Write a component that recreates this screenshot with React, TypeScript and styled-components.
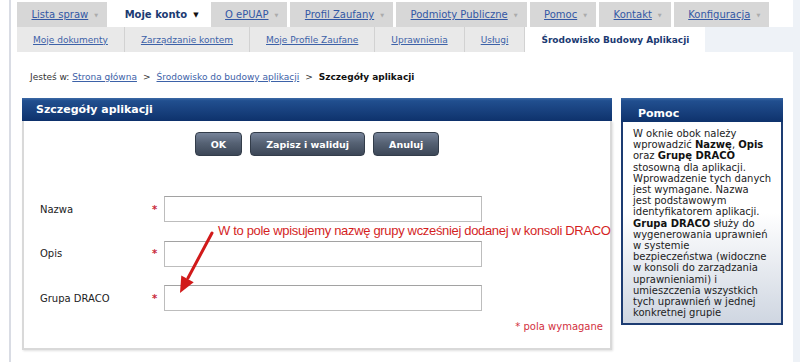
import React from 'react';
import styled, { createGlobalStyle } from 'styled-components';

const GlobalStyle = createGlobalStyle`
  html, body {
    margin: 0;
    padding: 0;
    background: #ffffff;
    font-family: 'DejaVu Sans', Verdana, sans-serif;
  }
`;

const Page = styled.div`
  width: 800px;
  height: 362px;
  display: flex;
  overflow: hidden;
`;

const Gutter = styled.div<{ $tint?: boolean }>`
  width: ${(p) => (p.$tint ? 'auto' : '9px')};
  flex: ${(p) => (p.$tint ? '1' : 'none')};
  background: ${(p) => (p.$tint ? '#eef2f7' : '#ffffff')};
`;

const Shell = styled.div`
  width: 782px;
  border-left: 2px solid #d9dce4;
  background: #ffffff;
  display: flex;
  flex-direction: column;
`;

const TopNav = styled.nav`
  display: flex;
  gap: 3px;
  height: 25px;
  margin-top: 2px;
  padding-left: 6px;
`;

const Tab = styled.div<{ $active?: boolean }>`
  display: flex;
  align-items: center;
  gap: 6px;
  padding: 0 9px 0 14.5px;
  background: ${(p) => (p.$active ? '#ffffff' : '#d7d7d7')};
  font-size: 10px;

  a {
    color: ${(p) => (p.$active ? '#1b3a72' : '#3358a5')};
    font-weight: ${(p) => (p.$active ? 'bold' : 'normal')};
    text-decoration: ${(p) => (p.$active ? 'none' : 'underline')};
  }
`;

const Caret = styled.span<{ $active?: boolean }>`
  font-size: ${(p) => (p.$active ? '7px' : '5px')};
  color: ${(p) => (p.$active ? '#111111' : '#ababab')};
`;

const SubNav = styled.div`
  display: flex;
  height: 25px;
  padding-left: 6px;
`;

const SubBar = styled.div`
  display: flex;
  background: #e9e9e9;
`;

const SubItem = styled.div<{ $active?: boolean }>`
  display: flex;
  align-items: center;
  padding: 0 16px;
  font-size: 9px;
  background: ${(p) => (p.$active ? '#ffffff' : 'transparent')};
  border-right: ${(p) => (p.$active ? 'none' : '1px solid #d2d2d2')};

  a {
    color: ${(p) => (p.$active ? '#1b3a72' : '#3d62a8')};
    font-weight: ${(p) => (p.$active ? 'bold' : 'normal')};
    text-decoration: ${(p) => (p.$active ? 'none' : 'underline')};
  }
`;

const SubRest = styled.div`
  flex: 1;
  background: #eef2f7;
`;

const Crumbs = styled.div`
  padding: 18px 0 0 19px;
  height: 14px;
  line-height: 14px;
  margin-bottom: 14px;
  font-size: 9px;
  color: #333333;

  a {
    color: #3d62a8;
    text-decoration: underline;
  }
  b {
    color: #111111;
  }
`;

const Sep = styled.span`
  margin: 0 6px;
`;

const Content = styled.div`
  display: flex;
  gap: 9px;
  padding-left: 11px;
`;

const MainPanel = styled.section`
  width: 590px;
`;

const PanelHead = styled.div<{ $tall?: boolean }>`
  height: ${(p) => (p.$tall ? '24px' : '23px')};
  padding-left: ${(p) => (p.$tall ? '17px' : '14px')};
  padding-top: ${(p) => (p.$tall ? '6px' : '0')};
  box-sizing: border-box;
  display: flex;
  align-items: center;
  background: linear-gradient(#3d6aa6 0%, #214f8f 12%, #173f7c 60%, #0e326c 100%);
  color: #ffffff;
  font-size: 11px;
  font-weight: bold;
`;

const PanelBody = styled.div`
  position: relative;
  height: 229px;
  box-sizing: border-box;
  border: 2px solid #d9d9d9;
  border-top: none;
  box-shadow: 1px 1px 2px rgba(0, 0, 0, 0.12);
  padding-top: 11px;
`;

const Actions = styled.div`
  display: flex;
  justify-content: center;
  gap: 8px;
`;

const Button = styled.button`
  height: 24px;
  padding: 0 15px;
  border: 1px solid #333d4a;
  border-radius: 4px;
  background: linear-gradient(#77849a 0%, #566274 45%, #3c4757 100%);
  color: #ffffff;
  font-family: 'DejaVu Sans', Verdana, sans-serif;
  font-size: 9.5px;
  font-weight: bold;
`;

const Form = styled.div`
  display: grid;
  grid-template-columns: 110px 14px 318px;
  grid-auto-rows: 26px;
  row-gap: 18.5px;
  align-items: center;
  margin-top: 40px;
  padding-left: 16px;
`;

const Label = styled.div`
  font-size: 10px;
  color: #222222;
`;

const Star = styled.span`
  color: #c8283a;
  font-size: 10px;
  font-weight: bold;
  padding-left: 2px;
`;

const Input = styled.input`
  height: 26px;
  box-sizing: border-box;
  border: 1px solid #bdbdbd;
  border-top-color: #a2a2a2;
  background: #ffffff;
  margin: 0;
`;

const Required = styled.div`
  margin-top: 10px;
  padding-right: 7px;
  text-align: right;
  font-size: 10px;
  line-height: 12px;
  color: #d2303e;
`;

const Note = styled.div`
  position: absolute;
  left: 194px;
  top: 102px;
  font-family: 'Liberation Sans', Arial, sans-serif;
  font-size: 13px;
  line-height: 16px;
  color: #d41f1f;
  white-space: nowrap;
  letter-spacing: -0.33px;
`;

const Arrow = styled.svg`
  position: absolute;
  left: 151px;
  top: 109px;
`;

const HelpPanel = styled.aside`
  width: 162px;
`;

const HelpBody = styled.div`
  height: 203px;
  box-sizing: border-box;
  border: 2px solid #1d3c72;
  border-top: none;
  padding: 6px 4px 0 10px;
  background: linear-gradient(#ffffff 0%, #ffffff 45%, #cfd6e1 100%);
  font-size: 10px;
  line-height: 11.2px;
  color: #222222;
  white-space: nowrap;

  b {
    color: #111111;
  }
`;

const tabs = [
  'Lista spraw',
  'Moje konto',
  'O ePUAP',
  'Profil Zaufany',
  'Podmioty Publiczne',
  'Pomoc',
  'Kontakt',
  'Konfiguracja',
];

const subs = ['Moje dokumenty', 'Zarządzanie kontem', 'Moje Profile Zaufane', 'Uprawnienia', 'Usługi'];

const fields = ['Nazwa', 'Opis', 'Grupa DRACO'];

export default function App() {
  return (
    <>
      <GlobalStyle />
      <Page>
        <Gutter />
        <Shell>
          <TopNav>
            {tabs.map((t) => {
              const active = t === 'Moje konto';
              return (
                <Tab key={t} $active={active}>
                  <a>{t}</a>
                  <Caret $active={active}>▼</Caret>
                </Tab>
              );
            })}
          </TopNav>
          <SubNav>
            <SubBar>
              {subs.map((s) => (
                <SubItem key={s}>
                  <a>{s}</a>
                </SubItem>
              ))}
              <SubItem $active>
                <a>Środowisko Budowy Aplikacji</a>
              </SubItem>
            </SubBar>
            <SubRest />
          </SubNav>

          <Crumbs>
            Jesteś w: <a>Strona główna</a>
            <Sep>&gt;</Sep>
            <a>Środowisko do budowy aplikacji</a>
            <Sep>&gt;</Sep>
            <b>Szczegóły aplikacji</b>
          </Crumbs>

          <Content>
            <MainPanel>
              <PanelHead>Szczegóły aplikacji</PanelHead>
              <PanelBody>
                <Actions>
                  <Button>OK</Button>
                  <Button>Zapisz i waliduj</Button>
                  <Button>Anuluj</Button>
                </Actions>
                <Form>
                  {fields.map((f) => (
                    <React.Fragment key={f}>
                      <Label>{f}</Label>
                      <Star>*</Star>
                      <Input />
                    </React.Fragment>
                  ))}
                </Form>
                <Required>* pola wymagane</Required>

                <Note>W to pole wpisujemy nazwę grupy wcześniej dodanej w konsoli DRACO</Note>
                <Arrow width="40" height="66" viewBox="0 0 40 66">
                  <line x1="37" y1="3" x2="13" y2="48" stroke="#d11a1a" strokeWidth="3" strokeLinecap="round" />
                  <polygon points="5,63 18.7,52.2 6.3,45.6" fill="#d11a1a" />
                </Arrow>
              </PanelBody>
            </MainPanel>

            <HelpPanel>
              <PanelHead $tall>Pomoc</PanelHead>
              <HelpBody>
                W oknie obok należy
                <br />
                wprowadzić <b>Nazwę</b>, <b>Opis</b>
                <br />
                oraz <b>Grupę DRACO</b>
                <br />
                stosowną dla aplikacji.
                <br />
                Wprowadzenie tych danych
                <br />
                jest wymagane. Nazwa
                <br />
                jest podstawowym
                <br />
                identyfikatorem aplikacji.
                <br />
                <b>Grupa DRACO</b> służy do
                <br />
                wygenerowania uprawnień
                <br />
                w systemie
                <br />
                bezpieczeństwa (widoczne
                <br />
                w konsoli do zarządzania
                <br />
                uprawnieniami) i
                <br />
                umieszczenia wszystkich
                <br />
                tych uprawnień w jednej
                <br />
                konkretnej grupie
              </HelpBody>
            </HelpPanel>
          </Content>
        </Shell>
        <Gutter $tint />
      </Page>
    </>
  );
}
